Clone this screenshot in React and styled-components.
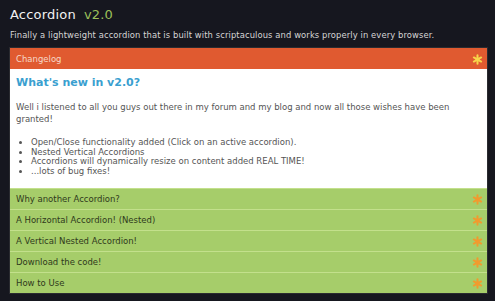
import React from 'react';
import styled, { createGlobalStyle } from 'styled-components';

const GlobalStyle = createGlobalStyle`
  html, body {
    margin: 0;
    padding: 0;
    background: #16171f;
  }
  body {
    font-family: "DejaVu Sans", Verdana, sans-serif;
  }
`;

const Page = styled.div`
  width: 495px;
  height: 301px;
  background: #16171f;
  padding: 5px 9px 0 9px;
  box-sizing: border-box;
  overflow: hidden;
`;

const Title = styled.h1`
  margin: 0 0 0 1px;
  font-size: 13px;
  font-weight: normal;
  color: #f2f2f2;
  line-height: 20px;
  letter-spacing: 0.2px;
`;

const Version = styled.span`
  color: #9cc05a;
  margin-left: 8px;
`;

const Intro = styled.p`
  margin: 4px 0 6px 1px;
  font-size: 8.4px;
  color: #d6d6d6;
  line-height: 12px;
  letter-spacing: 0.1px;
`;

const Panel = styled.div`
  width: 477px;
  border: 1px solid #2a2b30;
`;

const Toggle = styled.div`
  display: flex;
  align-items: center;
  justify-content: space-between;
  height: 21px;
  padding: 0 4px 0 6px;
  font-size: 8.5px;
  background: ${p => (p.$open ? '#e05a30' : '#a6cd6a')};
  color: ${p => (p.$open ? '#f6d8c8' : '#2f3a1c')};
  border-top: 1px solid ${p => (p.$open ? '#e05a30' : '#c3e08c')};
  box-sizing: border-box;
`;

const Content = styled.div`
  background: #fff;
  padding: 6px 6px 12px 6px;
  color: #555;
  font-size: 8.5px;
`;

const Heading = styled.h2`
  margin: 0 0 10px 0;
  font-size: 11px;
  font-weight: bold;
  color: #3a9fd0;
  line-height: 16px;
`;

const Para = styled.p`
  margin: 0 0 13px 0;
  line-height: 12px;
`;

const List = styled.ul`
  margin: 0;
  padding-left: 15px;
  line-height: 9.5px;
`;

const Star = ({ color }) => (
  <svg width="11" height="11" viewBox="0 0 12 12">
    <g stroke={color} strokeWidth="2.2" strokeLinecap="round">
      <line x1="6" y1="1.5" x2="6" y2="10.5" />
      <line x1="2" y1="3.8" x2="10" y2="8.2" />
      <line x1="2" y1="8.2" x2="10" y2="3.8" />
    </g>
    <circle cx="6" cy="6" r="2.2" fill={color} />
  </svg>
);

const items = [
  'Why another Accordion?',
  'A Horizontal Accordion! (Nested)',
  'A Vertical Nested Accordion!',
  'Download the code!',
  'How to Use',
];

const App = () => (
  <Page>
    <GlobalStyle />
    <Title>
      Accordion<Version>v2.0</Version>
    </Title>
    <Intro>
      Finally a lightweight accordion that is built with scriptaculous and works properly in every browser.
    </Intro>
    <Panel>
      <Toggle $open>
        <span>Changelog</span>
        <Star color="#f7d44a" />
      </Toggle>
      <Content>
        <Heading>What's new in v2.0?</Heading>
        <Para>
          Well i listened to all you guys out there in my forum and my blog and now all those wishes have been granted!
        </Para>
        <List>
          <li>Open/Close functionality added (Click on an active accordion).</li>
          <li>Nested Vertical Accordions</li>
          <li>Accordions will dynamically resize on content added REAL TIME!</li>
          <li>...lots of bug fixes!</li>
        </List>
      </Content>
      {items.map(item => (
        <Toggle key={item}>
          <span>{item}</span>
          <Star color="#f29a2e" />
        </Toggle>
      ))}
    </Panel>
  </Page>
);

export default App;
